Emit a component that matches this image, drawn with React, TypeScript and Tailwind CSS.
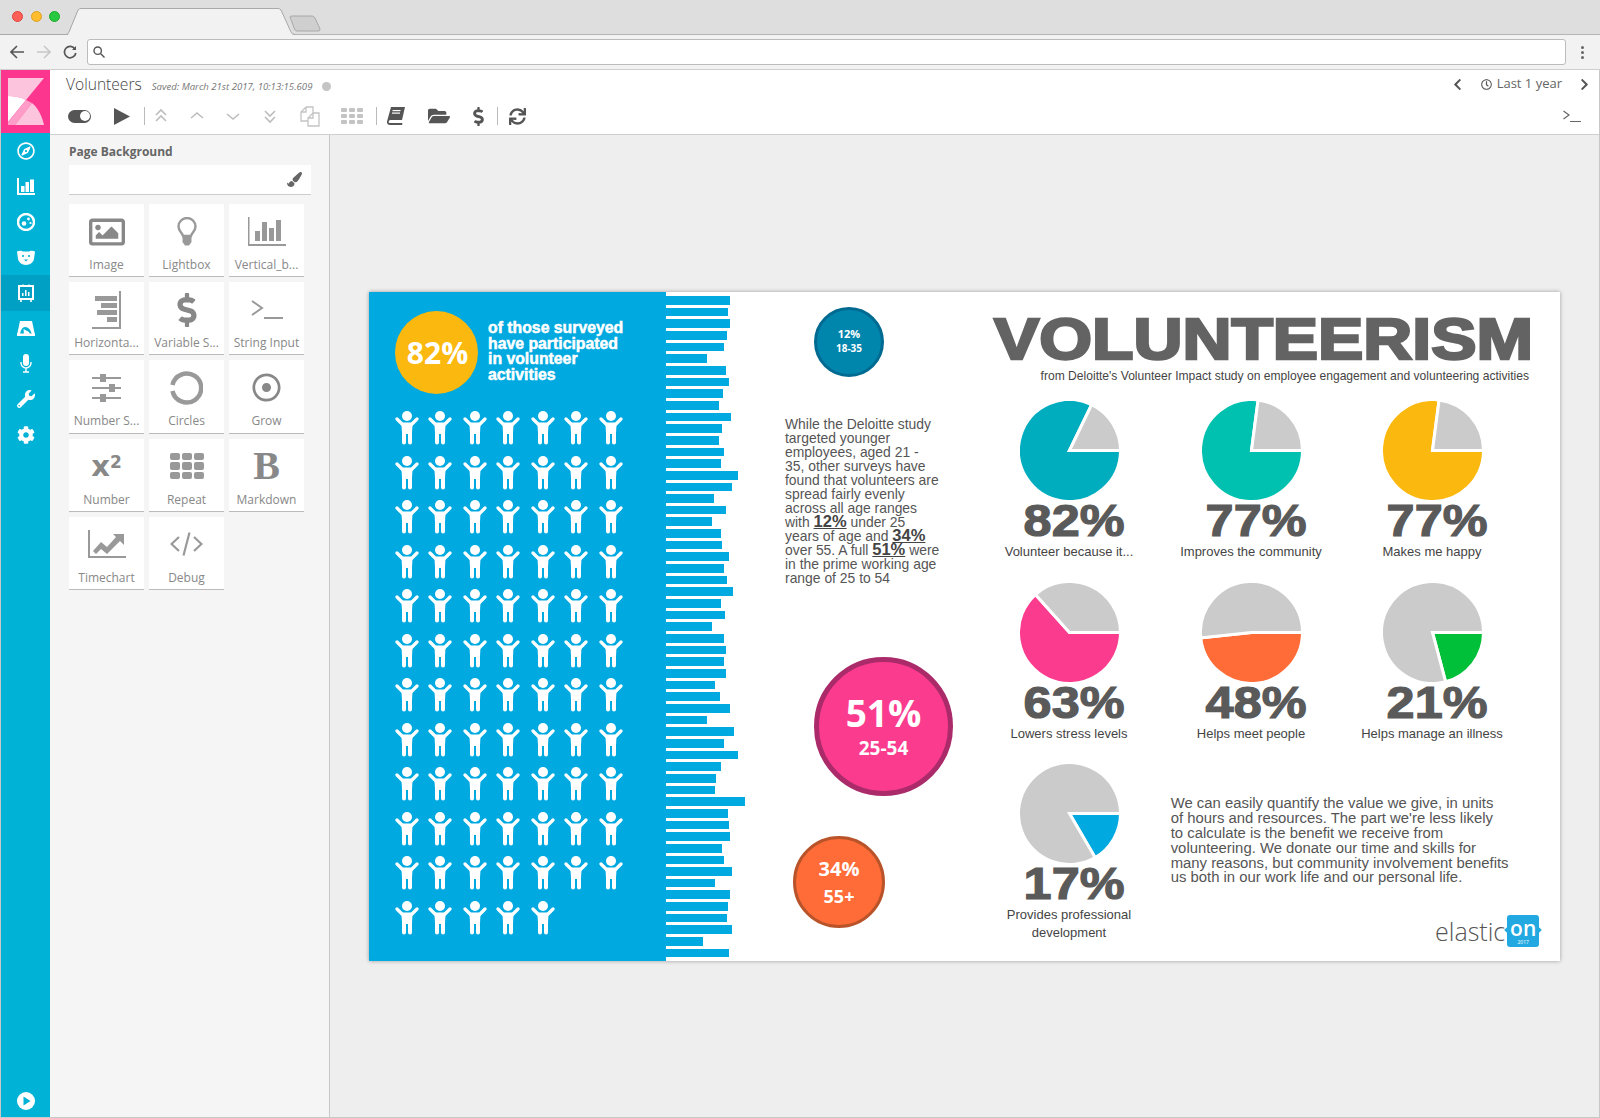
import React from "react";
import {
  FaRegCompass, FaWrench, FaCog, FaFolderOpen, FaDollarSign, FaSync, FaRegImage,
  FaRegDotCircle, FaPaintBrush, FaRegClock, FaChevronLeft, FaChevronRight,
} from "react-icons/fa";

const bars = [64,62,64,61,58,41,60,63,57,53,65,56,53,58,55,72,66,48,60,46,55,56,63,58,61,67,55,59,46,58,60,58,60,49,54,64,41,68,58,72,55,50,49,79,62,63,64,56,58,66,49,64,62,61,66,37,63];

function Person() {
  return (
    <svg width="24" height="34" viewBox="0 0 24 34" fill="white">
      <circle cx="12" cy="5" r="5" />
      <path d="M2 8 L8 14 M22 8 L16 14" stroke="white" strokeWidth="3.2" strokeLinecap="round" />
      <path d="M8 11.5 H16 Q17.5 11.5 17.5 13.5 L17 22 V31.5 Q17 33.5 15 33.5 Q13 33.5 13 31.5 V23 H11 V31.5 Q11 33.5 9 33.5 Q7 33.5 7 31.5 V22 L6.5 13.5 Q6.5 11.5 8 11.5 Z" />
    </svg>
  );
}

function Pie({ color, dx, dy }: { color: string; dx: number; dy: number }) {
  const r = 51;
  const c = 51;
  const a = Math.atan2(dy, dx);
  const ex = c + r * Math.cos(a);
  const ey = c + r * Math.sin(a);
  const cw = (a + 2 * Math.PI) % (2 * Math.PI);
  const large = cw > Math.PI ? 1 : 0;
  const coloured = `M${c} ${c} L${c + r} ${c} A${r} ${r} 0 ${large} 1 ${ex} ${ey} Z`;
  const grey = `M${c} ${c} L${ex} ${ey} A${r} ${r} 0 ${large ? 0 : 1} 1 ${c + r} ${c} Z`;
  return (
    <svg width="99" height="99" viewBox="1.5 1.5 99 99">
      <path d={coloured} fill={color} stroke="white" strokeWidth="3" />
      <path d={grey} fill="#cbcbcb" stroke="white" strokeWidth="3" />
    </svg>
  );
}

function BigPct({ children }: { children: React.ReactNode }) {
  return (
    <div className="ml-[10px] h-[43px] scale-x-[1.12] font-['Liberation_Sans',sans-serif] text-[45px] leading-[42px] font-bold whitespace-nowrap text-[#5a5a5a] [-webkit-text-stroke:1.2px_#5a5a5a]">
      {children}
    </div>
  );
}

function Label({ children }: { children: React.ReactNode }) {
  return <div className="text-center font-['Liberation_Sans',sans-serif] text-[13px] leading-[18px] text-[#444]">{children}</div>;
}

function Emph({ children }: { children: React.ReactNode }) {
  return <span className="text-[16.5px] leading-[0px] font-bold text-[#444] underline">{children}</span>;
}

function Chev({ d, c = "#bdbdbd" }: { d: string; c?: string }) {
  return (
    <svg width="14" height="16" viewBox="0 0 14 16" fill="none" stroke={c} strokeWidth="1.6">
      <path d={d} />
    </svg>
  );
}

function Tile({ label, children }: { label: string; children: React.ReactNode }) {
  return (
    <div className="flex h-[73.2px] flex-col items-center border-b border-[#bbb] bg-white font-['Open_Sans',sans-serif] text-[#888]">
      <div className="flex h-[53px] items-center justify-center pt-[2px]">{children}</div>
      <div className="text-[12px] leading-[16px] whitespace-nowrap">{label}</div>
    </div>
  );
}

function Side({ active, children }: { active?: boolean; children: React.ReactNode }) {
  return <div className={active ? "flex h-[35.5px] items-center justify-center bg-[#009fc4] text-white" : "flex h-[35.5px] items-center justify-center text-white"}>{children}</div>;
}

function Sep() {
  return <div className="h-[18px] w-px bg-[#bbb]" />;
}

export default function App() {
  return (
    <div className="flex h-[1118px] w-[1600px] flex-col overflow-hidden bg-white font-['Open_Sans',sans-serif]">
      {/* browser tab strip */}
      <div className="relative flex h-[35px] items-center gap-[7.5px] border-b border-[#b5b5b5] bg-[#dedede] pb-[2px] pl-[12px]">
        <span className="size-[11px] rounded-full border border-[#e0443e] bg-[#ff5f57]" />
        <span className="size-[11px] rounded-full border border-[#dea123] bg-[#ffbd2e]" />
        <span className="size-[11px] rounded-full border border-[#1aab29] bg-[#28c840]" />
        <svg className="absolute top-0 left-0" width="330" height="35" viewBox="0 0 330 35">
          <path d="M68 35 L79 8.5 H280 L293 35 Z" fill="#f2f2f2" />
          <path d="M0 34.5 H66 Q68 34.5 69 32 L78 10 Q79 8.5 81 8.5 H278 Q280 8.5 281 10 L291 32 Q292 34.5 295 34.5" fill="none" stroke="#a8a8a8" />
          <path d="M290 17 Q290 16 292 16 H312 Q314 16 315 18 L320 29 Q320.5 31 318 31 H297 Q295 31 294.5 29 Z" fill="#cfcfcf" stroke="#a8a8a8" />
        </svg>
      </div>
      {/* browser toolbar */}
      <div className="flex h-[35px] items-center border-b border-[#cfcfcf] bg-[#f2f2f2]">
        <svg className="ml-[10px]" width="14" height="14" viewBox="0 0 14 14" fill="none" stroke="#555" strokeWidth="1.6"><path d="M14 7 H1 M7 1 L1 7 L7 13" /></svg>
        <svg className="ml-[13px]" width="14" height="14" viewBox="0 0 14 14" fill="none" stroke="#c8c8c8" strokeWidth="1.6"><path d="M0 7 H13 M7 1 L13 7 L7 13" /></svg>
        <svg className="ml-[12px]" width="14" height="14" viewBox="0 0 14 14" fill="none" stroke="#555" strokeWidth="1.7"><path d="M12 4 A5.7 5.7 0 1 0 12.8 8" /><path d="M13 1 V5 H9 Z" fill="#555" stroke="none" /></svg>
        <div className="ml-[10px] flex h-[26px] w-[1479px] items-center rounded-[3px] border border-[#bcbcbc] bg-white pl-[5px]">
          <svg width="12" height="12" viewBox="0 0 12 12" fill="none" stroke="#555" strokeWidth="1.4"><circle cx="4.7" cy="4.7" r="3.7" /><path d="M7.5 7.5 L11.5 11.5" /></svg>
        </div>
        <div className="ml-[15px] flex flex-col gap-[2px]">
          <span className="size-[3px] rounded-full bg-[#666]" />
          <span className="size-[3px] rounded-full bg-[#666]" />
          <span className="size-[3px] rounded-full bg-[#666]" />
        </div>
      </div>

      <div className="flex min-h-0 flex-1 border-x border-b border-[#c8c8c8]">
        {/* sidebar */}
        <div className="flex w-[49px] shrink-0 flex-col bg-[#00b2d6]">
          <div className="flex h-[63px] shrink-0 items-center justify-center bg-[#fc358e]">
            <svg width="36" height="47" viewBox="0 0 36 47">
              <path d="M0 0 H36 L18 22 C12 19 6 18 0 18 Z" fill="#fdc4de" />
              <path d="M0 18 C6 18 12 19 18 22 L0 44 Z" fill="#ffffff" />
              <path d="M0 44 L18 22 C20 23 22 24 24 25 L7 47 H0 Z" fill="#ff9cc8" />
              <path d="M7 47 L24 25 C30 30 34 38 36 47 Z" fill="#fdc4de" />
            </svg>
          </div>
          <Side><FaRegCompass size={18} /></Side>
          <Side>
            <svg width="18" height="17" viewBox="0 0 18 17" fill="white"><path d="M0 0 H2 V15 H18 V17 H0 Z" /><rect x="4" y="8" width="3.5" height="6" /><rect x="8.5" y="4" width="3.5" height="10" /><rect x="13" y="1.5" width="4" height="12.5" /></svg>
          </Side>
          <Side>
            <svg width="18" height="18" viewBox="0 0 18 18"><circle cx="9" cy="9" r="8" fill="none" stroke="white" strokeWidth="2.4" /><circle cx="7" cy="10.5" r="2.3" fill="white" /><circle cx="11.5" cy="6" r="1.4" fill="white" /><circle cx="13.5" cy="10" r="1.1" fill="white" /></svg>
          </Side>
          <Side>
            <svg width="18" height="15" viewBox="0 0 18 15"><path d="M0 1.5 C3 0 5 1 6 1.5 H12 C13 1 15 0 18 1.5 L17 9 C16.5 12 13 15 9 15 C5 15 1.5 12 1 9 Z" fill="white" /><circle cx="6" cy="6" r="1.1" fill="#00b2d6" /><circle cx="12" cy="6" r="1.1" fill="#00b2d6" /><path d="M7 9.5 H11 L9 11.5 Z" fill="#00b2d6" /></svg>
          </Side>
          <Side active>
            <svg width="16" height="18" viewBox="0 0 16 18" fill="none"><rect x="1" y="2" width="14" height="13" stroke="white" strokeWidth="2" /><path d="M5 0.5 V2 M11 0.5 V2 M3 15 V18 M13 15 V18" stroke="white" strokeWidth="1.6" /><path d="M4 12 V9 H5.5 V12 Z M7 12 V6 H8.5 V12 Z M10 12 V8 H11.5 V12 Z" fill="white" /></svg>
          </Side>
          <Side>
            <svg width="18" height="15" viewBox="0 0 18 15" fill="white"><path d="M3 0 H15 L18 14 H15 C14 9 11.5 6 8 6 C5.5 6 3.5 9 3 14 H0 Z" /><rect x="0" y="12.5" width="18" height="2.5" /><path d="M6.5 8 L12 11 L13 14 H7 Z" /></svg>
          </Side>
          <Side>
            <svg width="12" height="19" viewBox="0 0 12 19" fill="none"><rect x="3" y="0" width="6" height="12" rx="3" fill="white" /><path d="M1 8 V9 A5 5 0 0 0 11 9 V8 M6 14 V18 M3 18 H9" stroke="white" strokeWidth="1.4" /></svg>
          </Side>
          <Side><FaWrench size={18} /></Side>
          <Side><FaCog size={18} /></Side>
          <div className="mt-auto mb-[7px] flex justify-center">
            <svg width="18" height="18" viewBox="0 0 18 18"><circle cx="9" cy="9" r="9" fill="white" /><path d="M6.5 4.5 L13.5 9 L6.5 13.5 Z" fill="#00b2d6" /></svg>
          </div>
        </div>

        <div className="flex min-w-0 flex-1 flex-col">
          {/* app header */}
          <div className="h-[65px] shrink-0 border-b border-[#cfcfcf] bg-white">
            <div className="flex h-[30px] items-center text-[#555]">
              <span className="-mt-[1px] ml-[16px] text-[15.6px] font-light text-[#444]">Volunteers</span>
              <span className="mt-[4px] ml-[10px] text-[9.6px] text-[#777] italic">Saved: March 21st 2017, 10:13:15.609</span>
              <span className="mt-[2px] ml-[10px] size-[9px] rounded-full bg-[#c4c4c4]" />
              <FaChevronLeft className="-mt-[2px] ml-auto" size={13} />
              <FaRegClock className="-mt-[2px] ml-[17px]" size={11} />
              <span className="-mt-[2px] ml-[5px] text-[13px] text-[#666]">Last 1 year</span>
              <FaChevronRight className="-mt-[2px] mr-[8px] ml-[16px]" size={13} />
            </div>
            <div className="flex h-[34px] items-center pb-[2px]">
              <div className="ml-[18px] flex h-[13px] w-[23px] items-center justify-end rounded-full bg-[#555] pr-[1.5px]"><span className="size-[10px] rounded-full bg-white" /></div>
              <svg className="ml-[22.5px]" width="16" height="17" viewBox="0 0 16 17" fill="#555"><path d="M0 0 L16 8.5 L0 17 Z" /></svg>
              <div className="ml-[14px]"><Sep /></div>
              <div className="ml-[9px]"><Chev d="M2 7 L7 2 L12 7 M2 13 L7 8 L12 13" /></div>
              <div className="ml-[22px]"><Chev d="M1 10 L7 5 L13 10" /></div>
              <div className="ml-[22px]"><Chev d="M1 6 L7 11 L13 6" /></div>
              <div className="ml-[23px]"><Chev d="M2 3 L7 8 L12 3 M2 9 L7 14 L12 9" /></div>
              <svg className="ml-[23px]" width="20" height="21" viewBox="0 0 20 21" fill="none" stroke="#c4c4c4" strokeWidth="1.3">
                <path d="M6 1 H13 V7 M6 1 V6 H1 M6 1 L1 6 V15 H8" />
                <path d="M13 7 V12 H8 M13 7 H19 V20 H8 V12 L13 7" />
              </svg>
              <div className="ml-[21px] grid grid-cols-3 gap-[2px]">
                {[0,1,2,3,4,5,6,7,8].map((i) => <span key={i} className="h-[4px] w-[6px] rounded-[1px] bg-[#c4c4c4]" />)}
              </div>
              <div className="ml-[13px]"><Sep /></div>
              <svg className="ml-[10px]" width="18" height="18" viewBox="0 0 18 18" fill="#555">
                <path d="M4 0 H18 L15 13 H3.5 Q1.8 13 1.6 15 Q1.6 16 3 16 H15.5 L15 18 H3 Q-0.4 18 0 14.5 Z" />
                <rect x="5.5" y="3" width="8" height="1.2" fill="#fff" />
                <rect x="5" y="5.5" width="8" height="1.2" fill="#fff" />
              </svg>
              <FaFolderOpen className="ml-[23px] text-[#555]" size={22} />
              <FaDollarSign className="ml-[19px] text-[#555]" size={19} />
              <div className="ml-[9px]"><Sep /></div>
              <FaSync className="ml-[11px] text-[#555]" size={17} />
              <svg className="mr-[18px] ml-auto" width="18" height="12" viewBox="0 0 18 12" fill="none" stroke="#666" strokeWidth="1.2"><path d="M0.5 1 L6 5 L0.5 9 M7 11.5 H18" /></svg>
            </div>
          </div>

          <div className="flex min-h-0 flex-1">
            {/* left panel */}
            <div className="w-[280px] shrink-0 border-r border-[#c8c8c8] bg-[#f5f5f5] pt-[9px] pl-[19px]">
              <div className="text-[12px] leading-[16px] font-bold text-[#666]">Page Background</div>
              <div className="mt-[5px] flex h-[30px] w-[242px] items-center justify-end border-b border-[#ccc] bg-white pr-[9px]">
                <FaPaintBrush className="text-[#666]" size={15} />
              </div>
              <div className="mt-[9px] grid w-[235px] grid-cols-3 gap-[5px]">
                <Tile label="Image"><FaRegImage size={36} /></Tile>
                <Tile label="Lightbox">
                  <svg width="20" height="29" viewBox="0 0 20 29" fill="none"><path d="M6 19 C5 15 1.5 14 1.5 9.5 A8.5 8.5 0 0 1 18.5 9.5 C18.5 14 15 15 14 19 Z" stroke="#999" strokeWidth="2.4" /><path d="M5.5 19 H14.5 V25 L12 28.5 H8 L5.5 25 Z" fill="#999" /></svg>
                </Tile>
                <Tile label="Vertical_b...">
                  <svg width="38" height="29" viewBox="0 0 38 29" fill="#999"><path d="M0 0 H1.5 V27 H38 V29 H0 Z" /><rect x="7" y="14" width="5" height="10" /><rect x="14" y="5" width="5" height="19" /><rect x="21" y="11" width="5" height="13" /><rect x="28" y="3" width="5" height="21" /></svg>
                </Tile>
                <Tile label="Horizonta...">
                  <svg width="29" height="38" viewBox="0 0 29 38" fill="#999"><path d="M27 0 H29 V38 H0 V36 H27 Z" /><rect x="3" y="5" width="22" height="5" /><rect x="9" y="12" width="16" height="5" /><rect x="5" y="19" width="20" height="5" /><rect x="15" y="26" width="10" height="5" /></svg>
                </Tile>
                <Tile label="Variable S..."><FaDollarSign size={34} /></Tile>
                <Tile label="String Input">
                  <svg width="32" height="20" viewBox="0 0 32 20" fill="none" stroke="#999" strokeWidth="2"><path d="M1 1 L11 8 L1 15 M13 18 H32" /></svg>
                </Tile>
                <Tile label="Number S...">
                  <svg width="29" height="28" viewBox="0 0 29 28" fill="#999"><rect x="0" y="3" width="29" height="2" /><rect x="0" y="13" width="29" height="2" /><rect x="0" y="23" width="29" height="2" /><rect x="8" y="0" width="6" height="8" /><rect x="17" y="10" width="6" height="8" /><rect x="8" y="20" width="6" height="8" /></svg>
                </Tile>
                <Tile label="Circles">
                  <svg width="33" height="34" viewBox="0 0 33 34" fill="none" stroke="#999" strokeWidth="4.5"><path d="M2.5 14 A14.5 14.5 0 1 1 2.5 20" /></svg>
                </Tile>
                <Tile label="Grow"><FaRegDotCircle size={29} /></Tile>
                <Tile label="Number"><span className="font-['DejaVu_Sans',sans-serif] text-[29px] leading-[30px] font-bold">x<sup className="text-[17px]">2</sup></span></Tile>
                <Tile label="Repeat">
                  <div className="grid grid-cols-3 gap-[2px]">
                    {[0,1,2,3,4,5,6,7,8].map((i) => <span key={i} className="h-[7.5px] w-[10px] rounded-[2px] bg-[#999]" />)}
                  </div>
                </Tile>
                <Tile label="Markdown"><span className="font-['Liberation_Serif',serif] text-[40px] leading-[40px] font-bold">B</span></Tile>
                <Tile label="Timechart">
                  <svg width="38" height="28" viewBox="0 0 38 28" fill="#999"><path d="M0 0 H2 V26 H38 V28 H0 Z" /><path d="M5 21 L13 12 L19 17 L28 7 L25 4 H36 V15 L32 11 L19 24 L13 19 L8 24 Z" /></svg>
                </Tile>
                <Tile label="Debug">
                  <svg width="33" height="24" viewBox="0 0 33 24" fill="none" stroke="#999" strokeWidth="2.2"><path d="M9 5 L1.5 12 L9 19 M24 5 L31.5 12 L24 19 M19.5 0.5 L13.5 23.5" /></svg>
                </Tile>
              </div>
            </div>

            {/* canvas */}
            <div className="min-w-0 flex-1 bg-[#eeeeee] pt-[157px] pl-[39px]">
              <div className="relative h-[669px] w-[1191px] overflow-hidden bg-white font-['Liberation_Sans',sans-serif] shadow-[0_0_4px_rgba(0,0,0,0.35)]">
                <div className="absolute top-0 left-0 h-full w-[297px] bg-[#00a9e0]" />
                <div className="absolute top-[4px] left-[297px] flex flex-col gap-[3px]">
                  {bars.map((w, i) => (
                    <div key={i} className="h-[8.67px] bg-[#00a9e0]" style={{ width: w }} />
                  ))}
                </div>

                <div className="absolute top-[19px] left-[26px] flex size-[83px] items-center justify-center rounded-full bg-[#fbb80f] pl-[2px] font-['Open_Sans',sans-serif] text-[30px] font-bold text-white">82%</div>
                <div className="absolute top-[28px] left-[119px] text-[15.8px] leading-[15.7px] font-bold whitespace-nowrap text-white [-webkit-text-stroke:0.5px_white]">
                  of those surveyed<br />have participated<br />in volunteer<br />activities
                </div>

                <div className="absolute top-[119px] left-[26px] grid grid-cols-[33px_35px_33px_35px_33px_35px_24px] auto-rows-[44.5px]">
                  {Array.from({ length: 82 }).map((_, i) => <Person key={i} />)}
                </div>

                <div className="absolute top-[15px] left-[445px] flex size-[70px] flex-col items-center justify-center rounded-full border-[3px] border-[#006a91] bg-[#0085ad] pb-[2px] font-['Open_Sans',sans-serif] font-bold text-white">
                  <div className="text-[11px] leading-[15px]">12%</div>
                  <div className="text-[10px] leading-[15px]">18-35</div>
                </div>

                <div className="absolute top-[125px] left-[416px] text-[13.9px] leading-[14px] whitespace-nowrap text-[#555]">
                  While the Deloitte study<br />targeted younger<br />employees, aged 21 -<br />35, other surveys have<br />found that volunteers are<br />spread fairly evenly<br />across all age ranges<br />with <Emph>12%</Emph> under 25<br />years of age and <Emph>34%</Emph><br />over 55. A full <Emph>51%</Emph> were<br />in the prime working age<br />range of 25 to 54
                </div>

                <div className="absolute top-[365px] left-[445px] flex size-[139px] flex-col items-center justify-center gap-[5px] rounded-full border-[5px] border-[#aa2a6a] bg-[#fb3c8e] font-['Open_Sans',sans-serif] font-bold text-white">
                  <div className="text-[37px] leading-[37px]">51%</div>
                  <div className="text-[19px] leading-[24px]">25-54</div>
                </div>
                <div className="absolute top-[544px] left-[424px] flex size-[92px] flex-col items-center justify-center gap-[3px] rounded-full border-[3.5px] border-[#b9532a] bg-[#ff6c37] font-['Open_Sans',sans-serif] font-bold text-white">
                  <div className="text-[20px] leading-[24px]">34%</div>
                  <div className="text-[18px] leading-[24px]">55+</div>
                </div>

                <div className="absolute top-[17px] left-[625px] origin-left scale-x-[1.19] text-[57px] leading-[60px] font-bold whitespace-nowrap text-[#636363] [-webkit-text-stroke:2.5px_#636363]">VOLUNTEERISM</div>
                <div className="absolute top-[76px] right-[31px] text-[12.08px] leading-[16px] whitespace-nowrap text-[#444]">from Deloitte's Volunteer Impact study on employee engagement and volunteering activities</div>

                <div className="absolute top-[109px] left-[615px] flex w-[170px] flex-col items-center">
                  <Pie color="#00adbf" dx={21.4} dy={-44.3} /><BigPct>82%</BigPct><Label>Volunteer because it...</Label>
                </div>
                <div className="absolute top-[109px] left-[797px] flex w-[170px] flex-col items-center">
                  <Pie color="#00c1b0" dx={6.4} dy={-49} /><BigPct>77%</BigPct><Label>Improves the community</Label>
                </div>
                <div className="absolute top-[109px] left-[978px] flex w-[170px] flex-col items-center">
                  <Pie color="#fbb80f" dx={6.4} dy={-49} /><BigPct>77%</BigPct><Label>Makes me happy</Label>
                </div>
                <div className="absolute top-[290.7px] left-[615px] flex w-[170px] flex-col items-center">
                  <Pie color="#fb3c8e" dx={-32} dy={-35.7} /><BigPct>63%</BigPct><Label>Lowers stress levels</Label>
                </div>
                <div className="absolute top-[290.7px] left-[797px] flex w-[170px] flex-col items-center">
                  <Pie color="#ff6c37" dx={-48} dy={5} /><BigPct>48%</BigPct><Label>Helps meet people</Label>
                </div>
                <div className="absolute top-[290.7px] left-[978px] flex w-[170px] flex-col items-center">
                  <Pie color="#00bf38" dx={12.5} dy={47} /><BigPct>21%</BigPct><Label>Helps manage an illness</Label>
                </div>
                <div className="absolute top-[472px] left-[615px] flex w-[170px] flex-col items-center">
                  <Pie color="#00a9e0" dx={25} dy={43} /><BigPct>17%</BigPct><Label>Provides professional<br />development</Label>
                </div>

                <div className="absolute top-[504px] left-[801.7px] text-[14.87px] leading-[14.87px] whitespace-nowrap text-[#555]">
                  We can easily quantify the value we give, in units<br />of hours and resources. The part we're less likely<br />to calculate is the benefit we receive from<br />volunteering. We donate our time and skills for<br />many reasons, but community involvement benefits<br />us both in our work life and our personal life.
                </div>

                <div className="absolute top-[623px] left-[1066px] flex items-center gap-[2px] font-['Open_Sans',sans-serif]">
                  <span className="text-[25px] leading-[30px] font-light text-[#555]">elastic</span>
                  <div className="relative flex h-[32px] w-[32px] flex-col items-center rounded-[3px] bg-[#23a9e1] pt-[2px] text-white">
                    <span className="absolute top-[13px] -left-[2px] size-[4px] rotate-45 bg-[#23a9e1]" />
                    <span className="absolute top-[13px] -right-[2px] size-[4px] rotate-45 bg-[#23a9e1]" />
                    <span className="text-[21px] leading-[23px] font-semibold">on</span>
                    <span className="text-[5px] leading-[5px]">2017</span>
                  </div>
                </div>
              </div>
            </div>
          </div>
        </div>
      </div>
    </div>
  );
}
